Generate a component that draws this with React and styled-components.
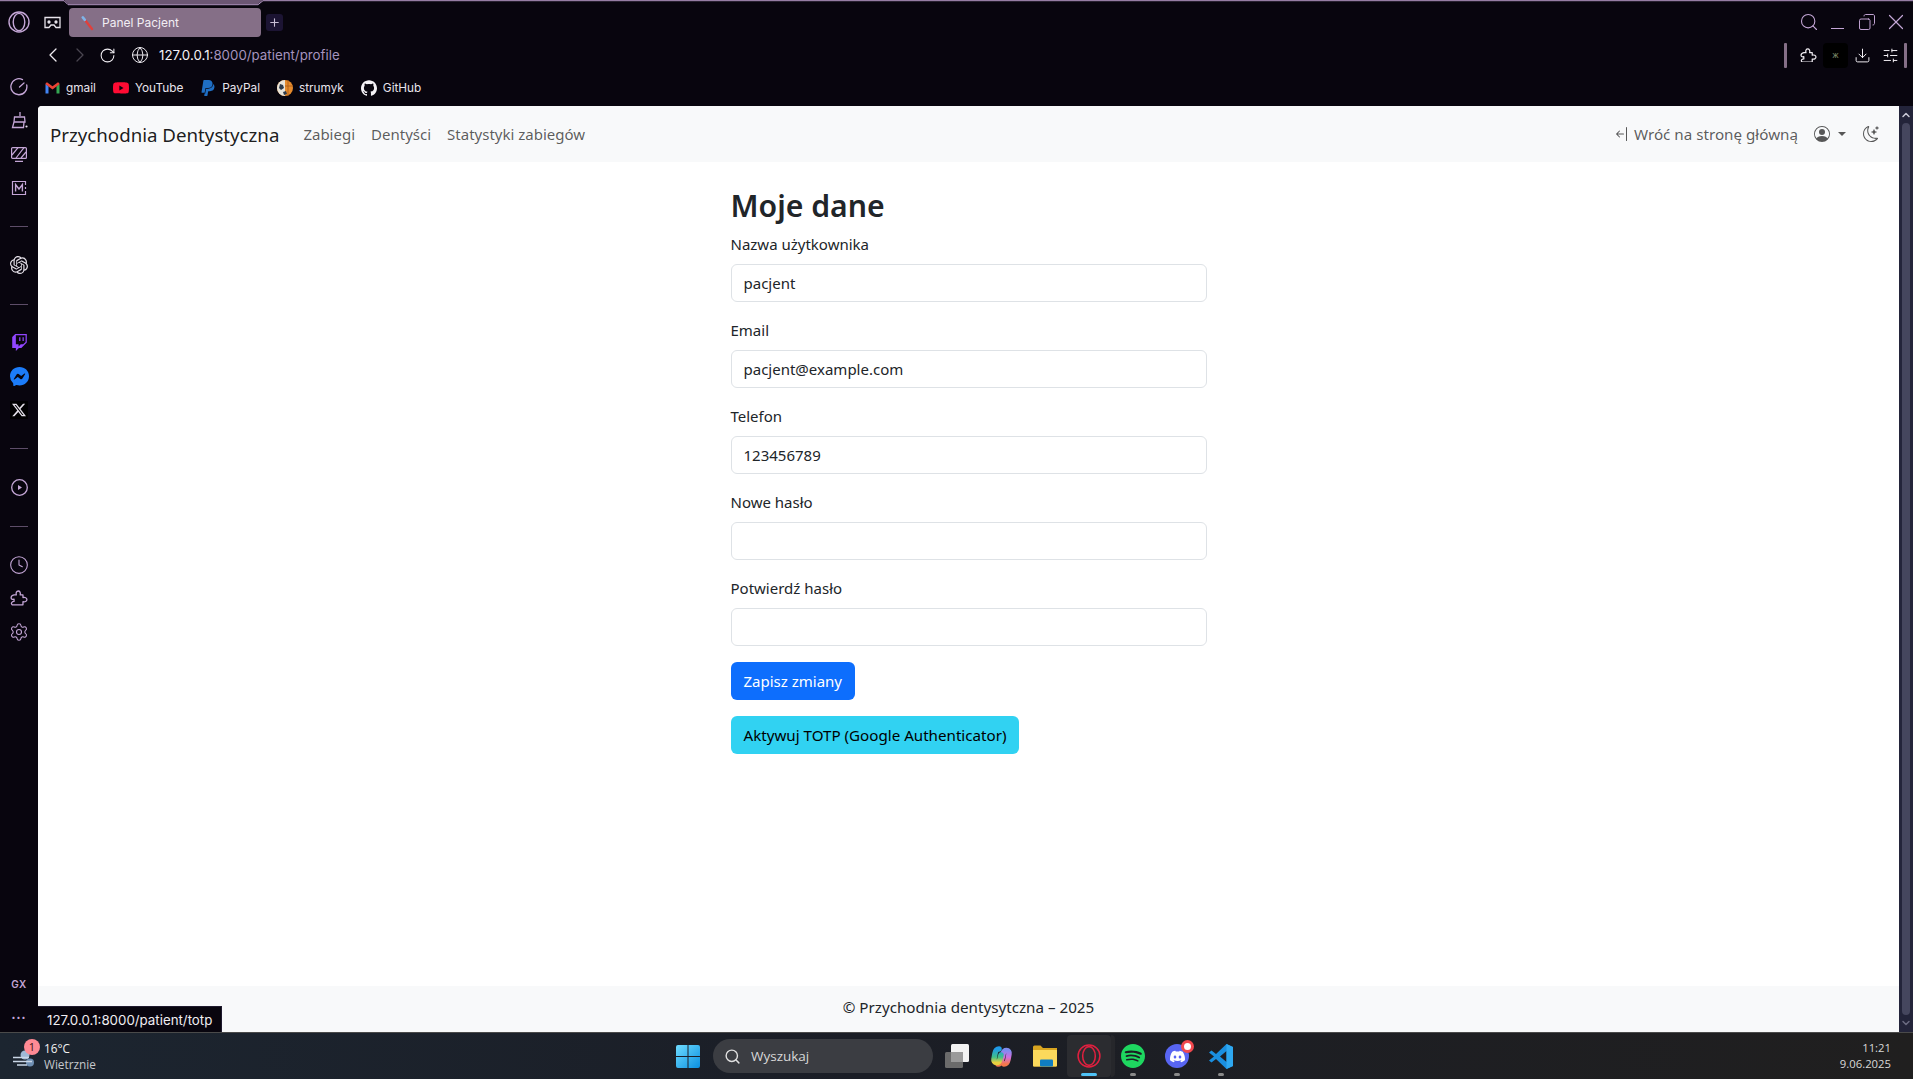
import React from 'react'
import styled, { createGlobalStyle } from 'styled-components'
import { Search, X, Copy, Download, SlidersHorizontal, ChevronLeft, ChevronRight, RotateCw, Globe, Clock, Settings, ChevronUp, ChevronDown, Plus } from 'lucide-react'
import { SiYoutube, SiPaypal, SiGithub, SiTwitch, SiMessenger, SiX, SiOpenai, SiSpotify, SiDiscord } from 'react-icons/si'
import { BsPersonCircle, BsMoonStars, BsArrowBarLeft } from 'react-icons/bs'

const fields = [
  { label: 'Nazwa użytkownika', value: 'pacjent' },
  { label: 'Email', value: 'pacjent@example.com' },
  { label: 'Telefon', value: '123456789' },
  { label: 'Nowe hasło', value: '' },
  { label: 'Potwierdź hasło', value: '' },
]

const lilac = '#c4a6d6'

const GmailLogo = () => (
  <svg width="15" height="12" viewBox="0 0 15 12">
    <path d="M0.5 11.5V2l3 2.3v7.2z" fill="#4285f4" />
    <path d="M11.5 11.5V4.3l3-2.3v9.5z" fill="#34a853" />
    <path d="M0.5 2.2C0.5.8 2 .1 3 .9l4.5 3.4L12 .9c1-.8 2.5-.1 2.5 1.3L11.5 4.4 7.5 7.4 3.5 4.4z" fill="#ea4335" />
  </svg>
)

const StrumykLogo = () => (
  <svg width="16" height="16" viewBox="0 0 16 16">
    <circle cx="8" cy="8" r="8" fill="#e58a2c" />
    <path d="M8 0a8 8 0 0 0 0 16z" fill="#e8e4da" />
    <path d="M3 4l3 1 1 3-3 2-2-2zM6 12l3-1 1 3-3 1z" fill="#2d3a4a" />
    <path d="M11 0v16M8 6h8" stroke="#a85a16" strokeWidth=".8" />
  </svg>
)

const OperaRing = ({ size = 22, color = lilac, width = 1.4 }) => (
  <svg width={size} height={size} viewBox="0 0 22 22" fill="none" stroke={color} strokeWidth={width}>
    <circle cx="11" cy="11" r="10" />
    <ellipse cx="11" cy="11" rx="5.8" ry="8.6" />
  </svg>
)

const MaskIcon = () => (
  <svg width="17" height="13" viewBox="0 0 17 13" fill="none" stroke="#e8e4ec" strokeWidth="1.3">
    <path d="M1 1.5h15v10h-4l-2-2.5H7l-2 2.5H1z" />
    <circle cx="5" cy="6" r="1" fill="#e8e4ec" />
    <circle cx="12" cy="6" r="1" fill="#e8e4ec" />
  </svg>
)

const ToothbrushIcon = () => (
  <svg width="14" height="16" viewBox="0 0 14 16" fill="none" strokeLinecap="round">
    <path d="M4 5l7 9" stroke="#e0403c" strokeWidth="2.4" />
    <path d="M1.8 2.4l2 2.4" stroke="#7fb4e8" strokeWidth="2.6" />
  </svg>
)

const SpeedIcon = () => (
  <svg width="18" height="18" viewBox="0 0 18 18" fill="none" stroke={lilac} strokeWidth="1.3" strokeLinecap="round">
    <path d="M12.500 1.600A8 8 0 1 0 16.700 7" />
    <path d="M9.500 9l4.500-4" />
  </svg>
)

const BroomIcon = () => (
  <svg width="17" height="17" viewBox="0 0 17 17" fill="none" stroke={lilac} strokeWidth="1.3">
    <path d="M9 0v4M3.500 5h10l.5 5H3zM3 10l-1.500 5.500h11L13 10" />
    <circle cx="15.500" cy="14.500" r="1.100" fill="#e6dcec" stroke="none" />
  </svg>
)

const StripedScreenIcon = () => (
  <svg width="16" height="15" viewBox="0 0 16 15" fill="none" stroke={lilac} strokeWidth="1.2">
    <rect x=".6" y=".6" width="14.8" height="10.8" rx="1" />
    <path d="M1 8l6-7.400M5 11l8-10.400M10 11l5-6M4 14.400h8" />
  </svg>
)

const ChipIcon = () => (
  <svg width="16" height="16" viewBox="0 0 16 16" fill="none" stroke={lilac} strokeWidth="1.2">
    <path d="M14.500 5V1.500h-13v13h13V11M14.500 7v2" />
    <path d="M4.600 11.400V4.600L8 9l3.400-4.400v6.800" strokeWidth="1.4" />
  </svg>
)

const PlayRingIcon = () => (
  <svg width="17" height="17" viewBox="0 0 17 17" fill="none" stroke={lilac} strokeWidth="1.3">
    <circle cx="8.500" cy="8.500" r="7.800" />
    <path d="M7 6l4 2.500L7 11z" fill={lilac} stroke="none" />
  </svg>
)

const SidePuzzleIcon = ({ color = lilac, size = 18 }) => (
  <svg width={size} height={size * 0.88} viewBox="0 0 18 16" fill="none" stroke={color} strokeWidth="1.3" strokeLinejoin="round">
    <path d="M4 5h2.300C5.600 2.800 6.600 1 8.200 1s2.600 1.700 2 4H13v2.700c2-.6 4 .3 4 2s-2 2.700-4 2.100V15H2.200c-1-.6-1.200-1.600-.4-2.500.7-.7 1.600-1 2.200-.9V9.300C2 9.800 1 9 1 7.800S2.200 5.400 4 5z" />
  </svg>
)

const WindIcon = () => (
  <svg width="24" height="18" viewBox="0 0 24 18">
    <circle cx="12" cy="5" r="4.500" fill="#9fb9d6" />
    <circle cx="17" cy="12.500" r="4" fill="#6f8fb3" />
    <path d="M0 7.500h16M0 11.500h19M4 15h10" stroke="#c9d6e6" strokeWidth="1.6" />
  </svg>
)

const WindowsLogo = () => (
  <svg width="24" height="23" viewBox="0 0 24 23">
    <defs>
      <linearGradient id="win" x1="0" y1="0" x2="1" y2="1">
        <stop offset="0" stopColor="#6fdcff" />
        <stop offset="1" stopColor="#0a8fe0" />
      </linearGradient>
    </defs>
    <path d="M0 2a2 2 0 0 1 2-2h9.500v11H0zM12.500 0H22a2 2 0 0 1 2 2v9H12.500zM0 12h11.500v11H2a2 2 0 0 1-2-2zM12.500 12H24v9a2 2 0 0 1-2 2h-9.500z" fill="url(#win)" />
  </svg>
)

const TaskViewLogo = () => (
  <svg width="24" height="24" viewBox="0 0 24 24">
    <rect x="0" y="8" width="18" height="16" rx="1.500" fill="#6b6b6b" />
    <rect x="6" y="0" width="18" height="18" rx="1.500" fill="#f2f2f2" />
    <rect x="6" y="8" width="12" height="10" fill="#9a9a9a" />
  </svg>
)

const CopilotLogo = () => (
  <svg width="23" height="23" viewBox="0 0 23 23" fill="none" strokeLinecap="round">
    <defs>
      <linearGradient id="cpa" x1="0" y1="0" x2="0" y2="1">
        <stop offset="0" stopColor="#1f9be8" />
        <stop offset=".6" stopColor="#3fc08a" />
        <stop offset="1" stopColor="#e8d040" />
      </linearGradient>
      <linearGradient id="cpb" x1="0" y1="0" x2="0" y2="1">
        <stop offset="0" stopColor="#7f8cf0" />
        <stop offset=".5" stopColor="#d070e0" />
        <stop offset="1" stopColor="#f5784a" />
      </linearGradient>
    </defs>
    <path d="M14 19c3 0 3.500-2 4-4.500l1-5.500c.4-2-.6-3.500-2.500-3.500S13.500 7 13 9l-1.500 6c-.5 2-1.500 4-3.500 4" stroke="url(#cpb)" strokeWidth="5.500" />
    <path d="M9 4C6 4 5.500 6 5 8.500L4 14c-.4 2 .6 3.500 2.500 3.500S9.500 16 10 14l1-4" stroke="url(#cpa)" strokeWidth="5.500" />
  </svg>
)

const FolderLogo = () => (
  <svg width="24" height="22" viewBox="0 0 24 22">
    <path d="M0 2A1.500 1.500 0 0 1 1.500.5h6L10 3h14v17.500a1 1 0 0 1-1 1H1a1 1 0 0 1-1-1z" fill="#d9a520" />
    <path d="M0 5h24v15.500a1 1 0 0 1-1 1H1a1 1 0 0 1-1-1z" fill="#fbd95c" />
    <rect x="7" y="14.500" width="13" height="7" rx="1" fill="#0f7dc2" />
  </svg>
)

const VsCodeLogo = () => (
  <svg width="24" height="25" viewBox="0 0 24 25">
    <path d="M17.500 0L24 3v19l-6.500 3L7 15l-4.500 3.500L0 16.500 5 12.500 0 8.500 2.500 6.500 7 10zM17.500 7L11 12.500l6.500 5.500z" fill="#1a8fe0" />
    <path d="M17.500 0L24 3v19l-6.500 3V18V7z" fill="#2ea8f0" />
  </svg>
)

const App = () => {
  return (
    <>
      <GlobalStyle />
      <Screen>
        <TopEdge viewBox="0 0 1913 6" preserveAspectRatio="none">
          <path d="M64 0l4 4H258l5-4z" fill="#6b5673" />
          <path d="M0 .7H64l4 4H258l5-4H1913" fill="none" stroke="#b89ac8" strokeWidth="1" />
        </TopEdge>
        <TabRow>
          <LogoSlot><OperaRing /></LogoSlot>
          <IconSlot $w={31}><MaskIcon /></IconSlot>
          <Tab>
            <ToothbrushIcon />
            <TabTitle>Panel Pacjent</TabTitle>
          </Tab>
          <NewTab><Plus size={13} color="#c9bfd6" /></NewTab>
          <WindowControls>
            <WinSlot><Search size={20} color={lilac} strokeWidth={1.3} /></WinSlot>
            <WinSlot><MinimizeLine /></WinSlot>
            <WinSlot><RestoreIcon size={18} color={lilac} strokeWidth={1.3} /></WinSlot>
            <WinSlot><X size={26} color={lilac} strokeWidth={1.1} /></WinSlot>
          </WindowControls>
        </TabRow>

        <Middle>
          <Sidebar>
            <SideIcon><SpeedIcon /></SideIcon>
            <SideIcon><BroomIcon /></SideIcon>
            <SideIcon><StripedScreenIcon /></SideIcon>
            <SideIcon><ChipIcon /></SideIcon>
            <SideRule />
            <SideIcon><SiOpenai size={18} color="#e4e0e8" /></SideIcon>
            <SideRule />
            <SideIcon><SiTwitch size={17} color="#9146ff" /></SideIcon>
            <SideIcon><SiMessenger size={19} color="#1c7cf9" /></SideIcon>
            <SideIcon><XBox><SiX size={14} color="#e4e0e8" /></XBox></SideIcon>
            <SideRule />
            <SideIcon><PlayRingIcon /></SideIcon>
            <SideRule />
            <SideIcon><Clock size={20} color={lilac} strokeWidth={1.3} /></SideIcon>
            <SideIcon><SidePuzzleIcon /></SideIcon>
            <SideIcon><Settings size={20} color={lilac} strokeWidth={1.3} /></SideIcon>
            <SideFoot>
              <GxMark>GX</GxMark>
              <SideDots>•••</SideDots>
            </SideFoot>
          </Sidebar>

          <Browser>
            <AddressRow>
              <NavButton><ChevronLeft size={24} color="#f0edf2" strokeWidth={1.3} /></NavButton>
              <NavButton><ChevronRight size={24} color="#4a4650" strokeWidth={1.3} /></NavButton>
              <NavButton><RotateCw size={17} color="#f0edf2" strokeWidth={1.5} /></NavButton>
              <GlobeSlot><Globe size={18} color="#f0edf2" strokeWidth={1.3} /></GlobeSlot>
              <Url>127.0.0.1<UrlRest>:8000/patient/profile</UrlRest></Url>
              <Toolbar>
                <ToolEdge />
                <ToolPuzzle><SidePuzzleIcon color="#f0edf2" size={17} /></ToolPuzzle>
                <ExtBox><ExtDot>ж</ExtDot></ExtBox>
                <ToolSlot><Download size={17} color="#f0edf2" strokeWidth={1.4} /></ToolSlot>
                <ToolSlot><SlidersHorizontal size={17} color="#f0edf2" strokeWidth={1.4} /></ToolSlot>
                <ToolEdge />
              </Toolbar>
            </AddressRow>

            <Bookmarks>
              <Bookmark><GmailLogo />gmail</Bookmark>
              <Bookmark><SiYoutube size={16} color="#ff0b33" />YouTube</Bookmark>
              <Bookmark><SiPaypal size={16} color="#1f6fc4" />PayPal</Bookmark>
              <Bookmark><StrumykLogo />strumyk</Bookmark>
              <Bookmark><SiGithub size={16} color="#f4f2f6" />GitHub</Bookmark>
            </Bookmarks>

            <PageRow>
              <Page>
                <Navbar>
                  <Brand>Przychodnia Dentystyczna</Brand>
                  <NavLink>Zabiegi</NavLink>
                  <NavLink>Dentyści</NavLink>
                  <NavLink>Statystyki zabiegów</NavLink>
                  <NavRight>
                    <BackLink><BsArrowBarLeft size={16} />Wróć na stronę główną</BackLink>
                    <UserMenu><BsPersonCircle size={16} /><Caret /></UserMenu>
                    <BsMoonStars size={16} />
                  </NavRight>
                </Navbar>

                <Main>
                  <Title>Moje dane</Title>
                  {fields.map((field) => (
                    <Field key={field.label}>
                      <Label>{field.label}</Label>
                      <Input readOnly value={field.value} />
                    </Field>
                  ))}
                  <Button $variant="primary">Zapisz zmiany</Button>
                  <Button $variant="info">Aktywuj TOTP (Google Authenticator)</Button>
                </Main>

                <Footer>© Przychodnia dentysytczna – 2025</Footer>
                <StatusBubble>127.0.0.1:8000/patient/totp</StatusBubble>
              </Page>
              <Scrollbar>
                <ChevronUp size={12} color="#c9c9d6" strokeWidth={3} />
                <ScrollThumb />
                <ChevronDown size={12} color="#6a6a80" strokeWidth={3} />
              </Scrollbar>
            </PageRow>
          </Browser>
        </Middle>

        <Taskbar>
          <Weather>
            <WeatherIcon>
              <WindIcon />
              <Badge>1</Badge>
            </WeatherIcon>
            <WeatherText>
              <span>16°C</span>
              <WeatherSub>Wietrznie</WeatherSub>
            </WeatherText>
          </Weather>
          <TaskCenter>
            <WindowsLogo />
            <SearchPill><Search size={17} color="#e0e0e0" />Wyszukaj</SearchPill>
            <TaskIcon><TaskViewLogo /></TaskIcon>
            <TaskIcon><CopilotLogo /></TaskIcon>
            <TaskIcon><FolderLogo /></TaskIcon>
            <ActiveTask>
              <OperaRing size={24} color="#e0203f" width={1.4} />
              <TaskMark $active />
            </ActiveTask>
            <TaskIcon>
              <SiSpotify size={24} color="#1ed760" />
              <TaskMark />
            </TaskIcon>
            <TaskIcon>
              <DiscordDisc><SiDiscord size={15} color="#fff" /></DiscordDisc>
              <DiscordDot />
              <TaskMark />
            </TaskIcon>
            <TaskIcon>
              <VsCodeLogo />
              <TaskMark />
            </TaskIcon>
          </TaskCenter>
          <TrayClock>
            <span>11:21</span>
            <span>9.06.2025</span>
          </TrayClock>
        </Taskbar>
      </Screen>
    </>
  )
}

export default App

const pageFont = `"Noto Sans", "Open Sans", sans-serif`

const GlobalStyle = createGlobalStyle`
  * { box-sizing: border-box; }
  html, body { margin: 0; padding: 0; height: 100%; overflow: hidden; }
  body { font-family: Inter, sans-serif; background: #08050e; }
`

const Screen = styled.div`
  position: relative;
  height: 1079px;
  display: flex;
  flex-direction: column;
  background: #08050e;
`

const TopEdge = styled.svg`
  position: absolute;
  top: 0;
  left: 0;
  width: 100%;
  height: 6px;
`

const TabRow = styled.div`
  height: 36px;
  padding-top: 8px;
  display: flex;
  align-items: flex-start;
  flex-shrink: 0;
`

const LogoSlot = styled.div`
  width: 37px;
  height: 28px;
  display: flex;
  align-items: center;
  justify-content: center;
`

const IconSlot = styled.div`
  width: ${(props) => props.$w}px;
  height: 28px;
  display: flex;
  align-items: center;
  justify-content: center;
`

const Tab = styled.div`
  width: 192px;
  height: 29px;
  margin-left: 1px;
  padding-left: 12px;
  display: flex;
  align-items: center;
  gap: 7px;
  background: #856f87;
  border-radius: 4px;
`

const TabTitle = styled.span`
  font-size: 12px;
  color: #f2eef4;
`

const NewTab = styled.div`
  width: 17px;
  height: 17px;
  margin: 6px 0 0 5px;
  display: flex;
  align-items: center;
  justify-content: center;
  background: #1c1433;
  border-radius: 3px;
`

const WindowControls = styled.div`
  margin-left: auto;
  padding: 4px 3px 0 0;
  display: flex;
  align-items: center;
`

const WinSlot = styled.div`
  width: 29px;
  height: 20px;
  display: flex;
  align-items: center;
  justify-content: center;
`

const MinimizeLine = styled.span`
  width: 13px;
  height: 1px;
  margin-top: 12px;
  background: ${lilac};
`

const RestoreIcon = styled(Copy)`
  transform: scaleX(-1);
`

const Middle = styled.div`
  flex: 1;
  min-height: 0;
  display: flex;
`

const Sidebar = styled.div`
  width: 38px;
  flex-shrink: 0;
  padding-top: 34.5px;
  display: flex;
  flex-direction: column;
  align-items: center;
`

const SideIcon = styled.div`
  height: 33.5px;
  width: 100%;
  flex-shrink: 0;
  display: flex;
  align-items: center;
  justify-content: center;
`

const XBox = styled.div`
  width: 18px;
  height: 18px;
  display: flex;
  align-items: center;
  justify-content: center;
  background: #000;
`

const SideRule = styled.div`
  width: 18px;
  height: 1px;
  margin: 21.5px 0;
  flex-shrink: 0;
  background: #5d4d68;
`

const SideFoot = styled.div`
  margin-top: auto;
  height: 66px;
  width: 100%;
  display: flex;
  flex-direction: column;
  align-items: center;
`

const GxMark = styled.div`
  height: 36px;
  display: flex;
  align-items: center;
  font-size: 10px;
  font-weight: 600;
  letter-spacing: .5px;
  color: ${lilac};
`

const SideDots = styled.div`
  height: 30px;
  display: flex;
  align-items: center;
  font-size: 7px;
  letter-spacing: 1px;
  color: ${lilac};
`

const Browser = styled.div`
  flex: 1;
  min-width: 0;
  display: flex;
  flex-direction: column;
`

const AddressRow = styled.div`
  height: 34px;
  flex-shrink: 0;
  padding: 4px 0 0 1.5px;
  display: flex;
  align-items: center;
`

const NavButton = styled.div`
  width: 27px;
  display: flex;
  justify-content: center;
`

const GlobeSlot = styled.div`
  margin-left: 9px;
  width: 20px;
  display: flex;
  justify-content: center;
`

const Url = styled.div`
  margin-left: 9.5px;
  font-size: 13.3px;
  color: #f4f2f6;
`

const UrlRest = styled.span`
  color: #a593bd;
`

const Toolbar = styled.div`
  margin-left: auto;
  padding-right: 6px;
  display: flex;
  align-items: center;
`

const ToolEdge = styled.div`
  width: 3px;
  height: 25px;
  background: #856f87;
  border-radius: 1px;
`

const ToolSlot = styled.div`
  width: 28px;
  display: flex;
  justify-content: center;
`

const ToolPuzzle = styled(ToolSlot)`
  margin: 0 1px 0 7px;
`

const ExtBox = styled.div`
  width: 25px;
  height: 25px;
  display: flex;
  align-items: center;
  justify-content: center;
  background: #000;
  border-radius: 4px;
`

const ExtDot = styled.span`
  font-size: 8px;
  color: #7d8a6a;
`

const Bookmarks = styled.div`
  height: 36px;
  flex-shrink: 0;
  padding: 0 0 1px 7px;
  display: flex;
  align-items: center;
  gap: 17px;
`

const Bookmark = styled.div`
  display: flex;
  align-items: center;
  gap: 6px;
  font-size: 11.8px;
  color: #e8e4ec;
`

const PageRow = styled.div`
  flex: 1;
  min-height: 0;
  display: flex;
`

const Page = styled.div`
  position: relative;
  flex: 1;
  min-width: 0;
  display: flex;
  flex-direction: column;
  background: #fff;
  border-top-left-radius: 4px;
  overflow: hidden;
  font-family: ${pageFont};
  color: #212529;
`

const Navbar = styled.nav`
  height: 56px;
  flex-shrink: 0;
  padding: 0 12px;
  display: flex;
  align-items: center;
  background: #f8f9fa;
`

const Brand = styled.div`
  margin-right: 16px;
  font-size: 18.7px;
  color: rgba(0, 0, 0, 0.9);
`

const NavLink = styled.div`
  padding: 0 8px;
  font-size: 15px;
  color: rgba(0, 0, 0, 0.65);
`

const NavRight = styled.div`
  margin-left: auto;
  padding-right: 8px;
  display: flex;
  align-items: center;
  color: rgba(0, 0, 0, 0.65);
`

const BackLink = styled.div`
  display: flex;
  align-items: center;
  gap: 4px;
  font-size: 15.2px;
`

const UserMenu = styled.div`
  margin: 0 17px 0 16px;
  display: flex;
  align-items: center;
  gap: 8px;
`

const Caret = styled.span`
  width: 0;
  height: 0;
  border-top: 4px solid rgba(0, 0, 0, 0.65);
  border-left: 4px solid transparent;
  border-right: 4px solid transparent;
`

const Main = styled.main`
  flex: 1;
  width: 476px;
  margin: 0 auto;
  padding-top: 24px;
  display: flex;
  flex-direction: column;
  align-items: flex-start;
`

const Title = styled.h2`
  margin: 1px 0 7px;
  font-size: 30.2px;
  line-height: 38.4px;
  font-weight: 600;
`

const Field = styled.div`
  width: 100%;
  margin-bottom: 16px;
`

const Label = styled.label`
  display: block;
  margin-bottom: 8px;
  font-size: 15px;
  line-height: 24px;
`

const Input = styled.input`
  display: block;
  width: 100%;
  height: 38px;
  padding: 6px 12px;
  border: 1px solid #dee2e6;
  border-radius: 6px;
  outline: none;
  background: #fff;
  font-family: ${pageFont};
  font-size: 15px;
  color: #212529;
`

const Button = styled.button`
  height: 38px;
  margin-bottom: 16px;
  padding: 0 13px;
  border: 0;
  border-radius: 6px;
  font-family: ${pageFont};
  font-size: ${(props) => (props.$variant === 'primary' ? '15px' : '15.15px')};
  color: ${(props) => (props.$variant === 'primary' ? '#fff' : '#000')};
  background: ${(props) => (props.$variant === 'primary' ? '#0d6efd' : '#31d2f2')};
`

const Footer = styled.footer`
  height: 46px;
  flex-shrink: 0;
  padding-bottom: 5px;
  display: flex;
  align-items: center;
  justify-content: center;
  background: #f8f9fa;
  font-size: 15.2px;
`

const StatusBubble = styled.div`
  position: absolute;
  left: 0;
  bottom: 0;
  height: 26px;
  width: 184px;
  padding-left: 9px;
  display: flex;
  align-items: center;
  background: #08050e;
  border: 1px solid #1f1a2e;
  border-left: 0;
  border-bottom: 0;
  font-family: Inter, sans-serif;
  font-size: 13.3px;
  color: #f0edf2;
`

const Scrollbar = styled.div`
  width: 14px;
  flex-shrink: 0;
  padding: 3px 0;
  display: flex;
  flex-direction: column;
  align-items: center;
  gap: 2px;
  background: #23243a;
`

const ScrollThumb = styled.div`
  flex: 1;
  width: 8px;
  background: #45465e;
  border-radius: 4px;
`

const Taskbar = styled.div`
  height: 47px;
  flex-shrink: 0;
  display: grid;
  grid-template-columns: 676px auto 1fr;
  align-items: center;
  border-top: 1px solid #4a4a4a;
  background: linear-gradient(90deg, #1c2530 0%, #1b1e26 45%, #201f1f 100%);
  font-family: "Open Sans", sans-serif;
`

const Weather = styled.div`
  padding-left: 13px;
  display: flex;
  align-items: center;
  gap: 7px;
`

const WeatherIcon = styled.div`
  position: relative;
  width: 24px;
  height: 18px;
  margin-top: 5px;
`

const Badge = styled.span`
  position: absolute;
  top: -11px;
  left: 11px;
  width: 16px;
  height: 16px;
  display: flex;
  align-items: center;
  justify-content: center;
  border-radius: 50%;
  background: #ff8a94;
  font-size: 11px;
  color: #3a1216;
`

const WeatherText = styled.div`
  display: flex;
  flex-direction: column;
  font-size: 11.8px;
  line-height: 16px;
  color: #f2f2f2;
`

const WeatherSub = styled.span`
  color: #c6c8cc;
`

const TaskCenter = styled.div`
  display: flex;
  align-items: center;
`

const SearchPill = styled.div`
  width: 220px;
  height: 34px;
  margin: 0 2px 0 13px;
  padding-left: 11px;
  display: flex;
  align-items: center;
  gap: 10px;
  border-radius: 17px;
  background: #3b3d42;
  font-size: 13.5px;
  color: #d8d8d8;
`

const TaskIcon = styled.div`
  position: relative;
  width: 44px;
  height: 42px;
  display: flex;
  align-items: center;
  justify-content: center;
`

const ActiveTask = styled(TaskIcon)`
  border-radius: 4px;
  background: #2b2c30;
  &::after {
    content: '';
    position: absolute;
    top: 0;
    bottom: 0;
    right: -4px;
    width: 4px;
    border-radius: 0 4px 4px 0;
    background: #26272b;
  }
`

const TaskMark = styled.span`
  position: absolute;
  bottom: 1px;
  left: 50%;
  transform: translateX(-50%);
  width: ${(props) => (props.$active ? '16px' : '6px')};
  height: 3px;
  border-radius: 2px;
  background: ${(props) => (props.$active ? '#4fc3f7' : '#8a8a8a')};
`

const DiscordDisc = styled.div`
  width: 24px;
  height: 24px;
  display: flex;
  align-items: center;
  justify-content: center;
  border-radius: 50%;
  background: #5865f2;
`

const DiscordDot = styled.span`
  position: absolute;
  top: 5px;
  right: 5px;
  width: 13px;
  height: 13px;
  border-radius: 50%;
  background: #fff;
  border: 3.5px solid #f0484e;
`

const TrayClock = styled.div`
  padding-right: 22px;
  display: flex;
  flex-direction: column;
  align-items: flex-end;
  font-size: 11.3px;
  line-height: 16px;
  color: #d8d8d8;
`
